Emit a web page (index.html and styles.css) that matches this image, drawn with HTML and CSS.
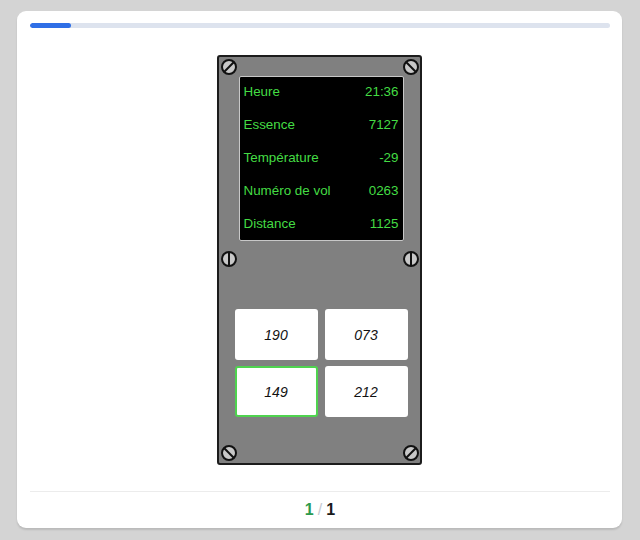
FILE: index.html
```html
<!DOCTYPE html>
<html lang="fr">
<head>
  <meta charset="UTF-8">
  <meta name="viewport" content="width=device-width, initial-scale=1.0">
  <title>Tableau de bord</title>
  <link rel="stylesheet" href="styles.css">
</head>
<body>
  <div class="card">
    <div class="progress"><div class="progress-fill"></div></div>

    <div class="stage">
      <div class="panel">
        <span class="screw tl slash"></span>
        <span class="screw tr back"></span>
        <span class="screw ml vert"></span>
        <span class="screw mr vert"></span>
        <span class="screw bl back"></span>
        <span class="screw br slash"></span>

        <div class="screen">
          <div class="rows">
            <div class="row"><span>Heure</span><span>21:36</span></div>
            <div class="row"><span>Essence</span><span>7127</span></div>
            <div class="row"><span>Température</span><span>-29</span></div>
            <div class="row"><span>Numéro de vol</span><span>0263</span></div>
            <div class="row"><span>Distance</span><span>1125</span></div>
          </div>
        </div>

        <div class="choices">
          <button class="choice">190</button>
          <button class="choice">073</button>
          <button class="choice selected">149</button>
          <button class="choice">212</button>
        </div>
      </div>
    </div>

    <div class="footer">
      <span class="current">1</span> <span class="sep">/</span> <span class="total">1</span>
    </div>
  </div>
</body>
</html>
```

FILE: styles.css
```css
body {
  margin: 0;
  padding: 11px 18px 12px 17px;
  background: #d4d4d4;
  font-family: "Liberation Sans", Arial, sans-serif;
}
.card {
  background: white;
  border-radius: 9px;
  height: 517px;
  padding: 12px 12px 0 13px;
  box-sizing: border-box;
  box-shadow: 0 2px 2px rgba(0,0,0,0.12);
  display: flex;
  flex-direction: column;
}
.progress {
  height: 5px;
  background: #dde3ee;
  border-radius: 3px;
  overflow: hidden;
}
.progress-fill {
  width: 41px;
  height: 100%;
  background: #2f6fe6;
  border-radius: 3px;
}
.stage {
  flex: 1;
  display: flex;
  justify-content: center;
  padding-top: 27px;
}
.panel {
  position: relative;
  width: 205px;
  height: 410px;
  margin-right: 2px;
  box-sizing: border-box;
  background: #808080;
  border: 2px solid #1c1c1c;
  border-radius: 3px;
  padding: 19px 0 0 20px;
}
.screen {
  width: 165px;
  height: 165px;
  box-sizing: border-box;
  background: black;
  border: 1px solid #c8c8c8;
  border-radius: 2px;
  padding: 0 4px;
  color: #44dc44;
  font-size: 13.4px;
}
.rows {
  margin-top: -2px;
}
.row {
  height: 33px;
  display: flex;
  align-items: center;
  justify-content: space-between;
}
.choices {
  margin: 68px 0 0 -4px;
  display: grid;
  grid-template-columns: 83px 83px;
  gap: 6px 7px;
}
.choice {
  height: 51px;
  background: white;
  border: 2px solid white;
  border-radius: 3px;
  font-family: "Liberation Sans", Arial, sans-serif;
  font-size: 14px;
  font-style: italic;
  color: #111;
  padding: 0;
}
.choice.selected {
  border-color: #4fd34f;
}
.screw {
  position: absolute;
  width: 16px;
  height: 16px;
  box-sizing: border-box;
  border: 2px solid #111;
  border-radius: 50%;
  background: #c8c8c8;
}
.screw::after {
  content: "";
  position: absolute;
  left: 5px;
  top: -1px;
  width: 2px;
  height: 14px;
  background: #111;
}
.screw.slash::after { transform: rotate(45deg); }
.screw.back::after { transform: rotate(-45deg); }
.tl { left: 2px; top: 2px; }
.tr { right: 1px; top: 2px; }
.ml { left: 2px; top: 194px; }
.mr { right: 1px; top: 194px; }
.bl { left: 2px; bottom: 2px; }
.br { right: 1px; bottom: 2px; }
.footer {
  border-top: 1px solid #ececec;
  margin-top: 1px;
  height: 36px;
  display: flex;
  align-items: center;
  justify-content: center;
  gap: 4px;
  font-size: 16px;
  font-weight: bold;
  color: #1a1a1a;
}
.footer .current { color: #2c9a4e; }
.footer .sep { color: #c5c9d2; font-weight: normal; }
```
